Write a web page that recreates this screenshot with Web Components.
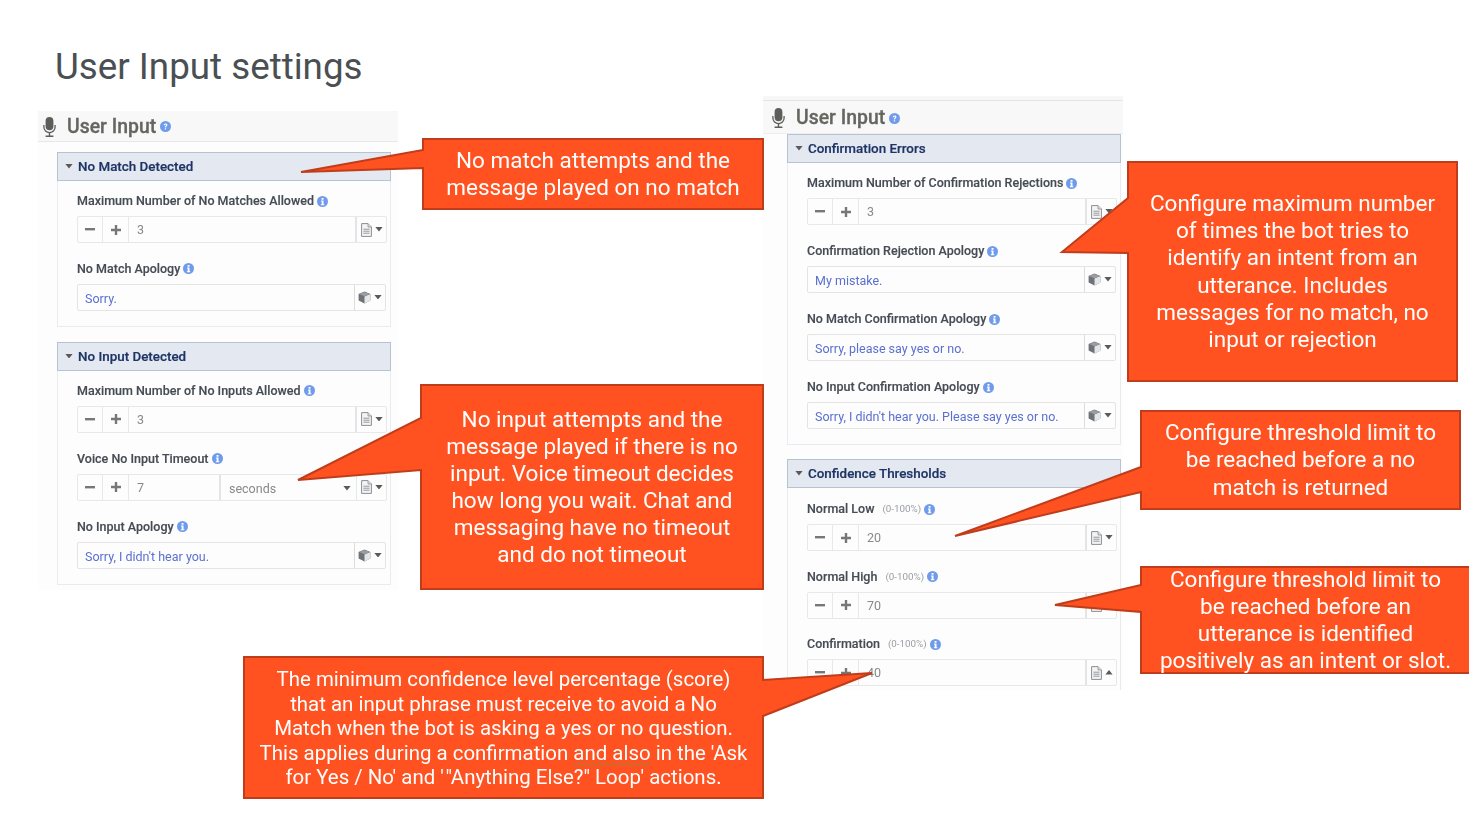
<!DOCTYPE html>
<html lang="en"><head><meta charset="utf-8"><title>User Input settings</title>
<style>
html,body{margin:0;padding:0;background:#fff;font-family:Roboto,"Liberation Sans",sans-serif}
</style></head><body>
<slide-canvas>
  <h1 slot="title">User Input settings</h1>
  <input-panel style="--x:38px;--y:111px;--h:479px">
    <form-section heading="No Match Detected" style="--gap:17.5px">
      <form-field label="Maximum Number of No Matches Allowed"><step-input value="3"></step-input></form-field>
      <form-field label="No Match Apology"><text-input value="Sorry."></text-input></form-field>
    </form-section>
    <form-section heading="No Input Detected" style="--gap:18px">
      <form-field label="Maximum Number of No Inputs Allowed"><step-input value="3"></step-input></form-field>
      <form-field label="Voice No Input Timeout"><step-input value="7" unit="seconds"></step-input></form-field>
      <form-field label="No Input Apology"><text-input value="Sorry, I didn't hear you."></text-input></form-field>
    </form-section>
  </input-panel>
  <input-panel lined style="--x:763px;--y:96px;--h:594px">
    <form-section heading="Confirmation Errors" style="--gap:18px">
      <form-field label="Maximum Number of Confirmation Rejections"><step-input value="3"></step-input></form-field>
      <form-field label="Confirmation Rejection Apology"><text-input value="My mistake."></text-input></form-field>
      <form-field label="No Match Confirmation Apology"><text-input value="Sorry, please say yes or no."></text-input></form-field>
      <form-field label="No Input Confirmation Apology"><text-input value="Sorry, I didn't hear you. Please say yes or no."></text-input></form-field>
    </form-section>
    <form-section heading="Confidence Thresholds" style="--gap:17.5px;--pt:13px;margin-top:-1px">
      <form-field label="Normal Low" hint="(0-100%)"><step-input value="20"></step-input></form-field>
      <form-field label="Normal High" hint="(0-100%)"><step-input value="70"></step-input></form-field>
      <form-field label="Confirmation" hint="(0-100%)"><step-input value="40" up></step-input></form-field>
    </form-section>
  </input-panel>

  <call-out rect="423,139,340,70" tip="423,150 301,172 423,168" size="22.5" lh="27.3">No match attempts and the<br>message played on no match</call-out>
  <call-out rect="421,385,342,204" tip="421,418 298,480 421,470" size="22.5" lh="27.1">No input attempts and the<br>message played if there is no<br>input. Voice timeout decides<br>how long you wait. Chat and<br>messaging have no timeout<br>and do not timeout</call-out>
  <call-out rect="1128,162,329,219" tip="1128,198 1062,252 1128,253" size="22.5" lh="27.1">Configure maximum number<br>of times the bot tries to<br>identify an intent from an<br>utterance. Includes<br>messages for no match, no<br>input or rejection</call-out>
  <call-out rect="1141,411,319,98" tip="1141,467 955,536 1141,492" size="22.5" lh="27.1">Configure threshold limit to<br>be reached before a no<br>match is returned</call-out>
  <call-out rect="1141,567,329,106" tip="1141,585 1055,605 1141,612" size="22.5" lh="27.1">Configure threshold limit to<br>be reached before an<br>utterance is identified<br>positively as an intent or slot.</call-out>
  <call-out rect="244,657,519,141" tip="763,680 872,673 763,716" size="20.45" lh="24.5" nudge="1">The minimum confidence level percentage (score)<br>that an input phrase must receive to avoid a No<br>Match when the bot is asking a yes or no question.<br>This applies during a confirmation <span style="text-decoration:underline wavy #8d8a3c 1px;text-underline-offset:2px">and also</span> in the 'Ask<br>for Yes / No' and <span style="letter-spacing:1.6px">'</span>"Anything Else?" Loop' actions.</call-out>
</slide-canvas>

<script>
function tpl(css, html){ return `<style>${css}</style>${html}`; }
const INFO = `<svg width="11" height="11" viewBox="0 0 12 12" aria-hidden="true"><circle cx="6" cy="6" r="6" fill="#6f9bea"/><rect x="5" y="2.2" width="2.1" height="1.9" fill="#fff"/><path d="M4.4 5h2.7v3.9h.9V10H4.2V8.9h.9V6.1h-.7z" fill="#fff"/></svg>`;
const CARET = (up)=>`<svg width="8" height="4.5" viewBox="0 0 8 5" aria-hidden="true"><path d="${up?'M0 5L4 0L8 5z':'M0 0H8L4 5z'}" fill="#5a5a5a"/></svg>`;
const FILE = `<svg width="11" height="14" viewBox="0 0 11 14" aria-hidden="true"><path d="M.6.6H7L10.4 4V13.4H.6z" fill="#f4f4f4" stroke="#8a8f94" stroke-width="1"/><path d="M7 .6V4H10.4" fill="#ddd" stroke="#8a8f94" stroke-width=".8"/><path d="M2.4 6.2H8.6M2.4 8.2H8.6M2.4 10.2H8.6" stroke="#8a8f94" stroke-width=".9"/></svg>`;
const CUBE = `<svg width="13" height="13" viewBox="0 0 13 13" aria-hidden="true"><path d="M6.5.6L12.4 3V9.6L6.5 12.4L.6 9.6V3z" fill="#6f7377"/><path d="M6.5 5.6L12.4 3V9.6L6.5 12.4z" fill="#e3e5e7"/><path d="M6.5.9L11.8 3L6.5 5.2L1.2 3z" fill="#9a9ea2"/></svg>`;

class SlideCanvas extends HTMLElement{
  constructor(){super();this.attachShadow({mode:'open'}).innerHTML=tpl(`
    :host{display:block;position:relative;width:1469px;height:823px;overflow:hidden;background:#fff}
    .t{padding:44px 0 0 55px}
    ::slotted(h1){margin:0;font:400 36.75px/46px Roboto,sans-serif;color:#4a4f53}
  `,`<div class="t"><slot name="title"></slot></div><slot></slot>`);}
}
class InputPanel extends HTMLElement{
  constructor(){super();this.attachShadow({mode:'open'}).innerHTML=tpl(`
    :host{display:block;position:absolute;left:var(--x);top:var(--y);width:360px;height:var(--h);overflow:hidden;background:#fdfdfd;filter:blur(.35px)}
    .strip{display:none;height:4px;background:#f7f7f7;border-bottom:1px solid #e4e4e4}
    :host([lined]) .strip{display:block}
    header{display:flex;align-items:center;height:29px;padding:1px 0 0 5px;background:#f8f8f8;border-bottom:1px solid #e7e7e7}
    :host([lined]) header{height:30px;padding:2px 0 0 9px;border-bottom-color:#eee}
    .mic{margin-right:11px;display:block}
    h2{margin:0;font:500 19.4px/24px Roboto,sans-serif;color:#666660;-webkit-text-stroke:.3px #666660}
    .q{margin-left:4px;display:block}
    .body{padding:10px 7px 0 19px;display:flex;flex-direction:column;gap:15px}
    :host([lined]) .body{padding:0 2px 0 24px}
  `,`<div class="strip"></div><header>
    <svg class="mic" width="13" height="20" viewBox="0 0 13 20" aria-hidden="true"><rect x="2.6" y="0" width="7.8" height="13.2" rx="3.9" fill="#5d5d5a"/><path d="M.9 8v2a5.6 5.6 0 0 0 11.2 0V8" fill="none" stroke="#5d5d5a" stroke-width="1.3"/><path d="M6.5 15.6V18.6M2.6 19.2H10.4" stroke="#5d5d5a" stroke-width="1.4"/></svg>
    <h2>User Input</h2>
    <svg class="q" width="11" height="11" viewBox="0 0 12 12" aria-hidden="true"><circle cx="6" cy="6" r="6" fill="#6f9bea"/><path d="M4 4.7C4 3.4 4.9 2.6 6.1 2.6C7.3 2.6 8.1 3.3 8.1 4.3C8.1 5.6 6.6 5.7 6.6 7.1H5.3C5.3 5.3 6.7 5.2 6.7 4.4C6.7 4 6.5 3.8 6 3.8C5.5 3.8 5.3 4.2 5.3 4.7zM5.3 7.8H6.7V9.2H5.3z" fill="#fff"/></svg>
  </header><div class="body"><slot></slot></div>`);}
}
class FormSection extends HTMLElement{
  constructor(){super();const s=this.attachShadow({mode:'open'});s.innerHTML=tpl(`
    :host{display:block;border:1px solid #e8ebf0;border-top:0;padding-bottom:15px}
    .h{display:flex;align-items:center;height:27px;margin:0 -1px;background:#e4e9f1;border:1px solid #b8c3d2;padding-left:7px;font:500 13.4px/16px Roboto,sans-serif;color:#1e3466;-webkit-text-stroke:.2px #1e3466}
    .h svg{margin-right:5px}
    .h span{position:relative;top:.5px}
    .c{padding:var(--pt,12px) 4px 0 19px;display:flex;flex-direction:column;gap:var(--gap,18px)}
  `,`<div class="h">${CARET(false)}<span></span></div><div class="c"><slot></slot></div>`);
    s.querySelector('span').textContent=this.getAttribute('heading');}
}
class FormField extends HTMLElement{
  constructor(){super();const s=this.attachShadow({mode:'open'});
    const hint=this.getAttribute('hint');
    s.innerHTML=tpl(`
    :host{display:block}
    .l{display:flex;align-items:center;height:16px;margin-bottom:7px;font:500 12.5px/16px Roboto,sans-serif;color:#464c55;-webkit-text-stroke:.15px #464c55}
    .hint{font-size:9.8px;font-weight:400;color:#9a9ea3;margin-left:8px;-webkit-text-stroke:0}
    svg{margin-left:3px}
  `,`<div class="l"><span class="t"></span>${hint?'<span class="hint"></span>':''}${INFO}</div><slot></slot>`);
    s.querySelector('.t').textContent=this.getAttribute('label');
    if(hint)s.querySelector('.hint').textContent=hint;}
}
class StepInput extends HTMLElement{
  constructor(){super();const s=this.attachShadow({mode:'open'});
    const unit=this.getAttribute('unit');
    s.innerHTML=tpl(`
    :host{display:flex;height:27px;width:310px;box-sizing:border-box;border:1px solid #e8e8e8;border-radius:2px;font:400 12.5px/25px Roboto,sans-serif;color:#87898b;background:#fdfdfd}
    .b{width:25px;display:flex;align-items:center;justify-content:center;border-right:1px solid #e8e8e8;flex:none}
    .b svg{display:block}
    .v{flex:1;padding-left:8px;border-right:2px solid #e4e4e4;min-width:0}
    :host([unit]) .v{flex:0 0 82px}
    .u{flex:1;border-right:1px solid #e8e8e8;padding:3px 5px 0 8px;display:flex;align-items:center;justify-content:space-between}
    .m{width:29px;flex:none;display:flex;align-items:center;justify-content:center;gap:3px}
  `,`<div class="b" style="width:24px"><svg width="10" height="3" viewBox="0 0 10 3"><rect width="10" height="2.4" fill="#777"/></svg></div>
     <div class="b"><svg width="10" height="10" viewBox="0 0 10 10"><path d="M3.8 0h2.4v3.8H10v2.4H6.2V10H3.8V6.2H0V3.8h3.8z" fill="#777"/></svg></div>
     <div class="v"></div>${unit?`<div class="u"><span class="ut"></span>${CARET(false)}</div>`:''}
     <div class="m">${FILE}${CARET(this.hasAttribute('up'))}</div>`);
    s.querySelector('.v').textContent=this.getAttribute('value');
    if(unit)s.querySelector('.ut').textContent=unit;}
}
class TextInput extends HTMLElement{
  constructor(){super();const s=this.attachShadow({mode:'open'});
    s.innerHTML=tpl(`
    :host{display:flex;height:27px;width:309px;box-sizing:border-box;border:1px solid #e4e4e4;border-radius:2px;font:400 12.5px/27px Roboto,sans-serif;color:#5a70cf;background:#fdfdfd}
    .v{flex:1;padding-left:7px;border-right:1px solid #dcdcdc;white-space:nowrap;overflow:hidden}
    .m{width:30px;flex:none;display:flex;align-items:center;justify-content:center;gap:3px}
  `,`<div class="v"></div><div class="m">${CUBE}${CARET(false)}</div>`);
    s.querySelector('.v').textContent=this.getAttribute('value');}
}
class CallOut extends HTMLElement{
  constructor(){super();const s=this.attachShadow({mode:'open'});
    const [x,y,w,h]=this.getAttribute('rect').split(',').map(Number);
    const t=this.getAttribute('tip').split(' ').map(p=>p.split(',').map(Number));
    const r=x+w,b=y+h; let pts;
    const tp=t.map(p=>p.join(',')).join(' ');
    if(t[0][0]===x) pts=`${x},${y} ${r},${y} ${r},${b} ${x},${b} ${[...t].reverse().map(p=>p.join(',')).join(' ')}`;
    else pts=`${x},${y} ${r},${y} ${tp} ${r},${b} ${x},${b}`;
    const nudge=this.getAttribute('nudge')||0;
    s.innerHTML=tpl(`
    :host{display:block;position:absolute;left:${x}px;top:${y}px;width:${w}px;height:${h}px;filter:blur(.2px)}
    svg{position:absolute;left:${-x}px;top:${-y}px;overflow:visible}
    polygon{fill:#ff5220;stroke:#bf3d1b;stroke-width:2}
    .t{position:absolute;inset:0;padding-top:${nudge*2}px;box-sizing:border-box;display:flex;align-items:center;justify-content:center;text-align:center;color:#fff;font:400 ${this.getAttribute('size')}px/${this.getAttribute('lh')}px Roboto,sans-serif;white-space:nowrap}
  `,`<svg width="1469" height="823" aria-hidden="true"><polygon points="${pts}"/></svg><div class="t"><div><slot></slot></div></div>`);}
}
customElements.define('slide-canvas',SlideCanvas);
customElements.define('input-panel',InputPanel);
customElements.define('form-section',FormSection);
customElements.define('form-field',FormField);
customElements.define('step-input',StepInput);
customElements.define('text-input',TextInput);
customElements.define('call-out',CallOut);
</script>
</body></html>
